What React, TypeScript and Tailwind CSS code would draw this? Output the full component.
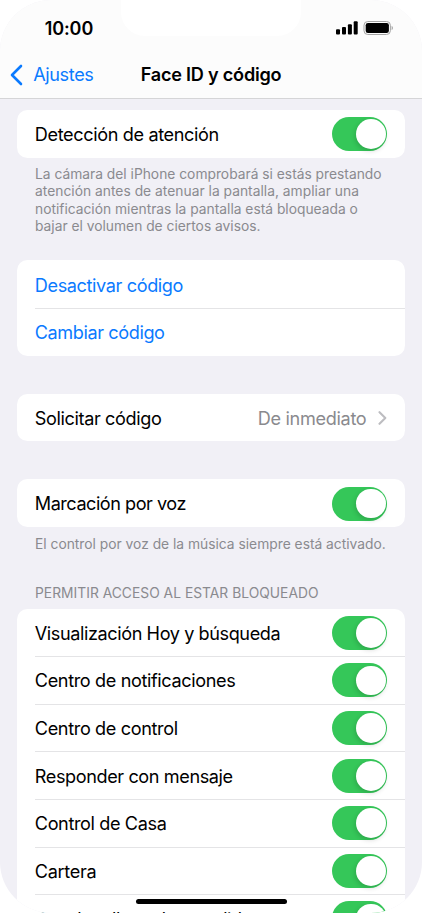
import type { ReactNode } from "react";

function Toggle() {
  return (
    <div className="flex h-[34px] w-[55.6px] shrink-0 items-center justify-end rounded-full bg-[#35c759] pr-[1.8px]">
      <div className="size-[29.8px] rounded-full bg-white shadow-[-1px_2px_5px_rgba(0,0,0,0.16)]" />
    </div>
  );
}

function Card({ children, className = "" }: { children: ReactNode; className?: string }) {
  return <section className={`mx-[17.3px] overflow-hidden rounded-[10.5px] bg-white pl-[17.5px] ${className}`}>{children}</section>;
}

function Row({ label, tracking = "", children }: { label: string; tracking?: string; children?: ReactNode }) {
  return (
    <div className="flex h-[47.6px] items-center justify-between border-t border-[#e4e4e6] pr-[17.3px] first:border-t-transparent">
      <span className={`pt-[1px] text-[18.1px] whitespace-nowrap ${tracking}`}>{label}</span>
      {children}
    </div>
  );
}

const access = [
  { label: "Visualización Hoy y búsqueda", tracking: "tracking-[-0.41px]" },
  { label: "Centro de notificaciones", tracking: "tracking-[-0.37px]" },
  { label: "Centro de control", tracking: "tracking-[-0.36px]" },
  { label: "Responder con mensaje", tracking: "tracking-[-0.4px]" },
  { label: "Control de Casa", tracking: "tracking-[-0.38px]" },
  { label: "Cartera", tracking: "tracking-[-0.3px]" },
  { label: "Devolver llamadas perdidas", tracking: "mt-[2px] tracking-[-0.38px]" },
];

export default function App() {
  return (
    <div className="h-[913px] w-[422px] overflow-hidden bg-white font-['Inter','Liberation_Sans',sans-serif] text-black">
      <div className="relative h-full overflow-hidden rounded-[51px] bg-[#f1f0f6]">
        <header className="relative h-[99px] border-b border-[#d5d5d7] bg-[#fcfcfc]">
          <div className="absolute top-0 left-[121px] h-[36px] w-[180px] rounded-b-[24px] bg-white" />
          <div className="flex h-[56px] items-center justify-between pr-[28px] pl-[44.7px]">
            <span className="text-[18px] font-semibold tracking-[-0.1px]">10:00</span>
            <svg width="58" height="14" viewBox="0 0 58 14" className="block">
              <g fill="#000">
                <rect x="0" y="8.2" width="4" height="5.3" rx="1" />
                <rect x="6" y="6" width="4" height="7.5" rx="1" />
                <rect x="11.9" y="3.2" width="4" height="10.3" rx="1" />
                <rect x="17.7" y="0.3" width="4" height="13.2" rx="1" />
                <rect x="29.7" y="2" width="23.2" height="10" rx="2.3" />
              </g>
              <rect x="28" y="0.5" width="26.4" height="13" rx="3.8" fill="none" stroke="#a4a4a4" />
              <path d="M55.6 4.8c1.8.8 1.8 3.6 0 4.4z" fill="#a4a4a4" />
            </svg>
          </div>
          <div className="grid h-[38px] grid-cols-[1fr_auto_1fr] items-center px-[10px]">
            <div className="flex items-center gap-[10.2px] text-[#0a7aff]">
              <svg width="13" height="22" viewBox="0 0 13 22" fill="none" stroke="currentColor" strokeWidth="2.6" strokeLinecap="round" strokeLinejoin="round">
                <path d="M11 2 2 11l9 9" />
              </svg>
              <span className="text-[18.1px] tracking-[-0.38px]">Ajustes</span>
            </div>
            <h1 className="text-[18.1px] font-semibold tracking-[-0.22px]">Face ID y código</h1>
            <div />
          </div>
        </header>

        <main>
          <Card className="mt-[11px]">
            <Row label="Detección de atención" tracking="tracking-[-0.36px]"><Toggle /></Row>
          </Card>
          <p className="mt-[8.4px] pl-[35px] text-[13.8px] leading-[17.35px] whitespace-nowrap text-[#8a8a8f]">
            <span className="block">La cámara del iPhone comprobará si estás prestando</span>
            <span className="block tracking-[0.02px]">atención antes de atenuar la pantalla, ampliar una</span>
            <span className="block">notificación mientras la pantalla está bloqueada o</span>
            <span className="block">bajar el volumen de ciertos avisos.</span>
          </p>

          <Card className="mt-[25.1px] text-[#0a7aff]">
            <Row label="Desactivar código" tracking="tracking-[-0.38px]" />
            <Row label="Cambiar código" tracking="tracking-[-0.4px]" />
          </Card>

          <Card className="mt-[38px]">
            <Row label="Solicitar código" tracking="tracking-[-0.37px]">
              <div className="flex items-center gap-[12px] text-[#8a8a8e]">
                <span className="pt-[1px] text-[18.1px] tracking-[-0.3px]">De inmediato</span>
                <svg width="9" height="14" viewBox="0 0 9 14" fill="none" stroke="#bdbdc1" strokeWidth="2.1" strokeLinecap="round" strokeLinejoin="round">
                  <path d="m1.5 1.2 5.8 5.8-5.8 5.8" />
                </svg>
              </div>
            </Row>
          </Card>

          <Card className="mt-[38px]">
            <Row label="Marcación por voz" tracking="tracking-[-0.48px]"><Toggle /></Row>
          </Card>
          <p className="mt-[8.8px] pl-[35px] text-[13.8px] leading-[17.35px] whitespace-nowrap text-[#8a8a8f]">
            El control por voz de la música siempre está activado.
          </p>

          <h2 className="mt-[31.6px] pl-[35px] text-[13.8px] leading-[17.35px] tracking-[0.02px] whitespace-nowrap text-[#8a8a8f]">
            PERMITIR ACCESO AL ESTAR BLOQUEADO
          </h2>
          <Card className="mt-[6.7px]">
            {access.map((item) => (
              <Row key={item.label} {...item}><Toggle /></Row>
            ))}
          </Card>
        </main>
        <div className="absolute bottom-[8.8px] left-[136px] h-[5.4px] w-[150.5px] rounded-full bg-black" />
      </div>
    </div>
  );
}
